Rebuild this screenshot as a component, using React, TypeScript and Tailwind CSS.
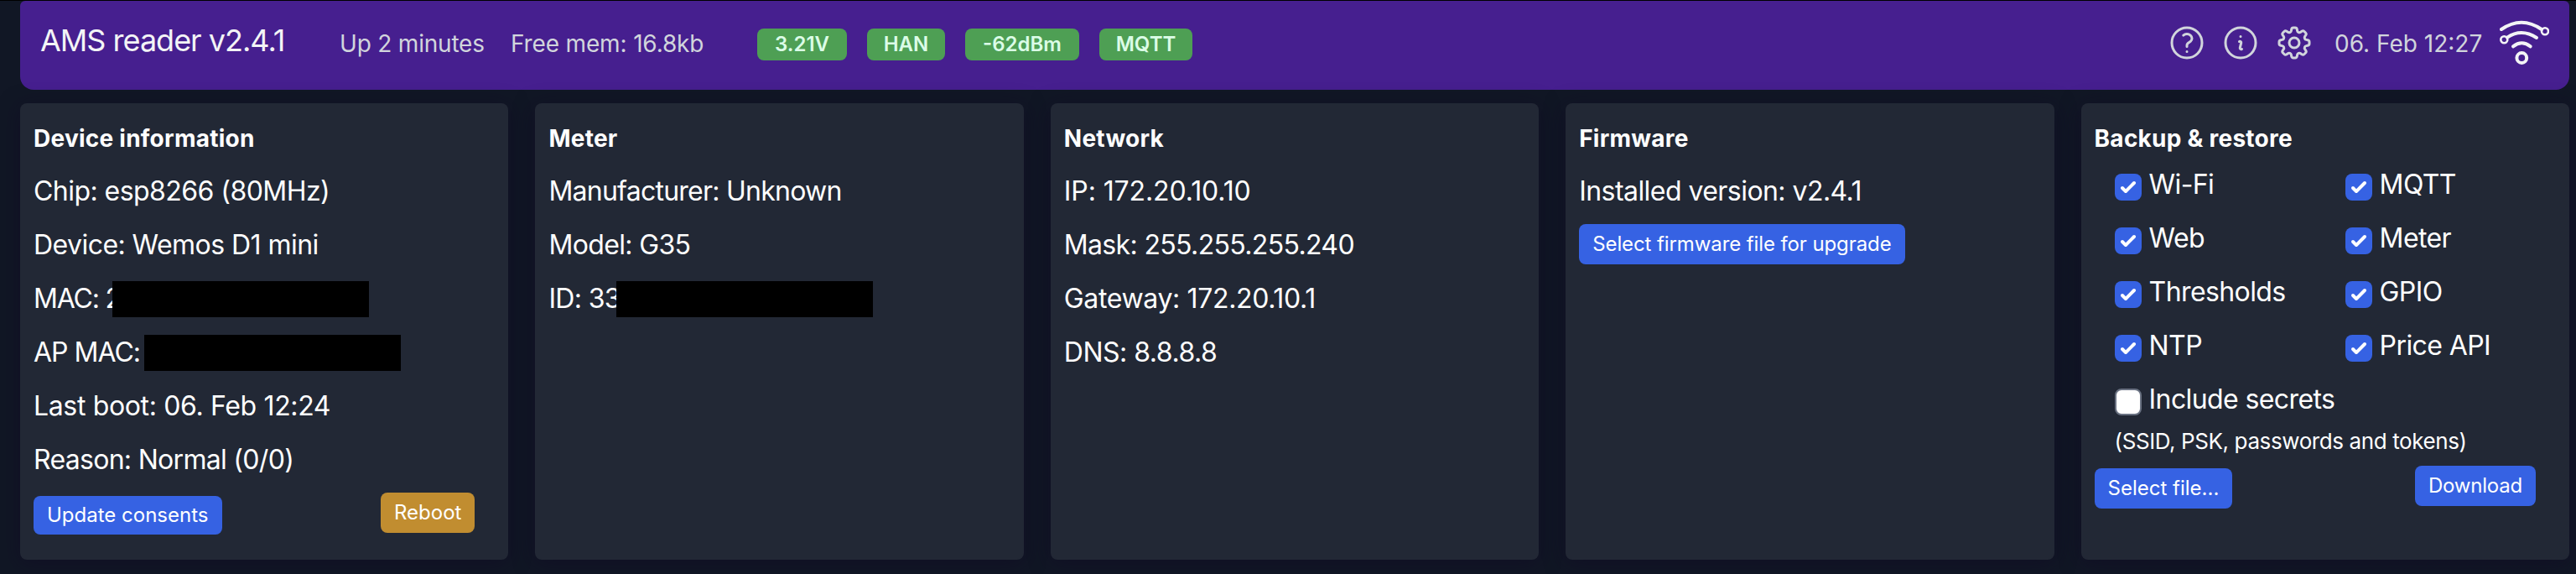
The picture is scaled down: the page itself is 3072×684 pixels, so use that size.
import React from 'react';
import { HiOutlineCog8Tooth, HiOutlineInformationCircle, HiOutlineQuestionMarkCircle } from 'react-icons/hi2';

const badges = [
  { label: '3.21V', width: 'w-[107px]' },
  { label: 'HAN', width: 'w-[93px]' },
  { label: '-62dBm', width: 'w-[136px]' },
  { label: 'MQTT', width: 'w-[111px]' },
];

const backupItems = ['Wi-Fi', 'MQTT', 'Web', 'Meter', 'Thresholds', 'GPIO', 'NTP', 'Price API'];

const Logo: React.FC = () => (
  <svg className="w-[60px] h-[54px]" viewBox="0 0 60 54" fill="none" stroke="currentColor" strokeWidth="4" strokeLinecap="round">
    <path d="M3 11Q27 -5.5 51 11" />
    <path d="M10 20.7Q27 9.3 45 21" />
    <path d="M17 31.3Q27.3 23.3 37.7 31.3" />
    <circle cx="27.3" cy="45" r="5.9" />
    <circle cx="55" cy="13.3" r="4" strokeWidth="2.6" />
    <circle cx="6.3" cy="23.3" r="4" strokeWidth="2.6" />
  </svg>
);

const Card: React.FC<{ title: string; children: React.ReactNode }> = ({ title, children }) => (
  <div className="flex flex-col rounded-lg bg-[#222835] px-4 pt-[22px] shadow-[0_4px_24px_rgba(17,10,36,0.6)]">
    <strong className="text-[28px] leading-[40px] font-bold tracking-[0.25px]">{title}</strong>
    {children}
  </div>
);

const Rows: React.FC<{ children: React.ReactNode }> = ({ children }) => (
  <div className="mt-[11px] mb-px tracking-[-0.65px]">{children}</div>
);

const Row: React.FC<{ children: React.ReactNode }> = ({ children }) => (
  <div className="flex h-16 items-center whitespace-pre">{children}</div>
);

const Redacted: React.FC = () => <span className="h-[43px] w-[306px] shrink-0 bg-black" />;

const Checkbox: React.FC<{ label: string; checked?: boolean }> = ({ label, checked }) => (
  <div className="flex h-16 items-center">
    {checked ? (
      <span className="mt-1 flex size-8 items-center justify-center rounded-lg bg-[#3662e3]">
        <svg viewBox="0 0 16 16" fill="white" className="size-8">
          <path d="M12.207 4.793a1 1 0 010 1.414l-5 5a1 1 0 01-1.414 0l-2-2a1 1 0 011.414-1.414L6.5 9.086l4.293-4.293a1 1 0 011.414 0z" />
        </svg>
      </span>
    ) : (
      <span className="mt-1 size-8 rounded-lg border-2 border-gray-500 bg-white" />
    )}
    <span className="mb-[3px] ml-[9px] tracking-[-0.6px] whitespace-nowrap">{label}</span>
  </div>
);

const App: React.FC = () => {
  return (
    <div className="h-[684px] w-[3072px] overflow-hidden border-t border-black bg-[#111725] pr-2 pl-6 font-['Inter',sans-serif] text-[32px] leading-[48px] text-white">
      <header className="flex h-[106px] items-center rounded-b-2xl rounded-t-md bg-[#461f8f] px-6 pb-0.5 text-[28px] text-gray-300">
        <div className="w-[357px] pb-2.5 text-[36px] tracking-[-1px] text-gray-100">AMS reader v2.4.1</div>
        <div className="w-[204px] pb-0.5 tracking-[-0.2px]">Up 2 minutes</div>
        <div className="w-[294px] pb-0.5 tracking-[-0.15px]">Free mem: 16.8kb</div>
        <div className="flex gap-6">
          {badges.map(badge => (
            <span
              key={badge.label}
              className={`h-[38px] rounded-lg bg-[#4e9f54] text-center text-[24px] leading-[38px] font-semibold text-green-100 ${badge.width}`}
            >
              {badge.label}
            </span>
          ))}
        </div>
        <div className="ml-auto flex items-center">
          <div className="mb-1 flex gap-4">
            <HiOutlineQuestionMarkCircle className="size-12" />
            <HiOutlineInformationCircle className="size-12" />
            <HiOutlineCog8Tooth className="size-12" />
          </div>
          <span className="ml-6 w-[196px] pb-0.5 whitespace-nowrap">06. Feb 12:27</span>
          <span className="mb-1 text-gray-100">
            <Logo />
          </span>
        </div>
      </header>

      <div className="mt-4 grid h-[544px] grid-cols-5 gap-8">
        <Card title="Device information">
          <Rows>
            <Row>
              <span className="tracking-[-0.55px]">Chip: esp8266 (80MHz)</span>
            </Row>
            <Row>
              <span className="tracking-[-0.55px]">Device: Wemos D1 mini</span>
            </Row>
            <Row>
              <span className="w-[94px] tracking-[-1.2px]">MAC: 2</span>
              <Redacted />
            </Row>
            <Row>
              <span className="w-[132px] tracking-[-1px]">AP MAC:</span>
              <Redacted />
            </Row>
            <Row>
              <span className="tracking-[-0.35px]">Last boot: 06. Feb 12:24</span>
            </Row>
            <Row>
              <span className="tracking-[-0.7px]">Reason: Normal (0/0)</span>
            </Row>
          </Rows>
          <div className="flex items-start justify-between pr-6">
            <button className="mt-[10px] h-[46px] rounded-lg bg-[#3662e3] px-4 text-[24px] leading-[46px]">Update consents</button>
            <button className="mt-[6px] h-12 rounded-lg bg-[#c18d30] px-4 text-[24px]">Reboot</button>
          </div>
        </Card>

        <Card title="Meter">
          <Rows>
            <Row>
              <span className="tracking-[-0.75px]">Manufacturer: Unknown</span>
            </Row>
            <Row>Model: G35</Row>
            <Row>
              <span className="w-[81px]">ID: 33</span>
              <Redacted />
            </Row>
          </Rows>
        </Card>

        <Card title="Network">
          <Rows>
            <Row>
              <span className="tracking-[-0.1px]">IP: 172.20.10.10</span>
            </Row>
            <Row>Mask: 255.255.255.240</Row>
            <Row>
              <span className="tracking-[-0.35px]">Gateway: 172.20.10.1</span>
            </Row>
            <Row>
              <span className="tracking-[-0.5px]">DNS: 8.8.8.8</span>
            </Row>
          </Rows>
        </Card>

        <Card title="Firmware">
          <Rows>
            <Row>
              <span className="tracking-[-0.55px]">Installed version: v2.4.1</span>
            </Row>
          </Rows>
          <button className="mt-[6px] h-12 self-start rounded-lg bg-[#3662e3] px-4 text-[24px] tracking-[-0.1px]">
            Select firmware file for upgrade
          </button>
        </Card>

        <Card title="Backup & restore">
          <div className="mt-1 grid grid-cols-[275px_1fr] pl-6">
            {backupItems.map(item => (
              <Checkbox key={item} label={item} checked />
            ))}
            <Checkbox label="Include secrets" />
          </div>
          <div className="pl-6 text-[26px] leading-[34px] tracking-[-0.4px]">(SSID, PSK, passwords and tokens)</div>
          <div className="flex items-start justify-between pr-6">
            <button className="mt-[15px] h-12 rounded-lg bg-[#3662e3] px-4 text-[24px]">Select file...</button>
            <button className="mt-3 h-12 rounded-lg bg-[#3662e3] px-4 text-[24px] tracking-[-0.2px]">Download</button>
          </div>
        </Card>
      </div>
    </div>
  );
};

export default App;
